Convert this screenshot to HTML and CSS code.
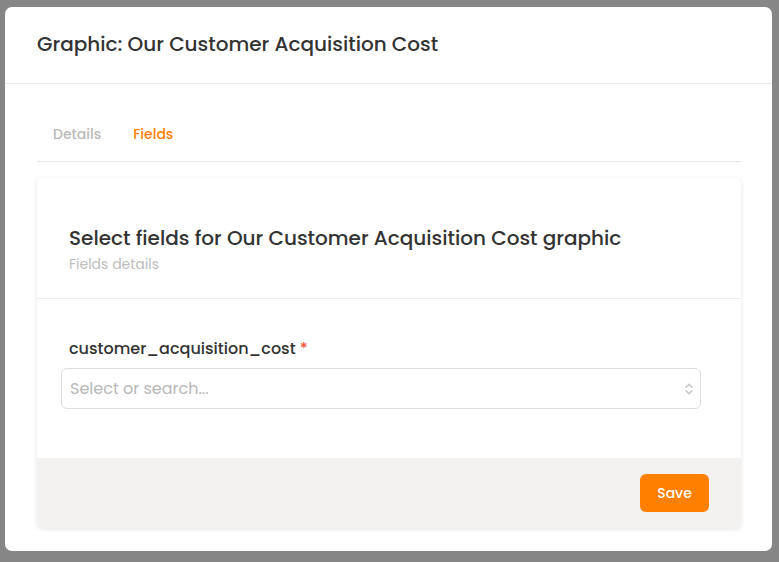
FILE: index.html
```html
<!DOCTYPE html>
<html>
<head>
<meta charset="utf-8">
<link rel="stylesheet" href="styles.css">
</head>
<body>
<div class="overlay">
  <div class="modal">
    <div class="modal-header">
      <h1 class="modal-title">Graphic: Our Customer Acquisition Cost</h1>
    </div>
    <div class="modal-body">
      <div class="tabs">
        <span class="tab">Details</span>
        <span class="tab active">Fields</span>
      </div>
      <div class="card">
        <div class="card-head">
          <h2 class="card-title">Select fields for Our Customer Acquisition Cost graphic</h2>
          <div class="card-sub">Fields details</div>
        </div>
        <div class="card-fields">
          <label class="field-label">customer_acquisition_cost <span class="req">*</span></label>
          <div class="select">
            <span class="placeholder">Select or search...</span>
            <svg class="chev" width="10" height="14" viewBox="0 0 10 14" fill="none" stroke="#c8c8c8" stroke-width="1.6" stroke-linecap="round" stroke-linejoin="round"><path d="M2 5.2 L5 2.2 L8 5.2"/><path d="M2 8.8 L5 11.8 L8 8.8"/></svg>
          </div>
        </div>
        <div class="card-footer">
          <button class="btn-save">Save</button>
        </div>
      </div>
    </div>
  </div>
</div>
</body>
</html>
```

FILE: styles.css
```css
* { box-sizing: border-box; }
html, body { margin: 0; padding: 0; }
body {
  width: 779px;
  height: 562px;
  background: #868686;
  font-family: "Poppins", "Open Sans", "Noto Sans", sans-serif;
  color: #333;
  overflow: hidden;
}
.overlay {
  padding: 7px 7px 0 5px;
}
.modal {
  width: 767px;
  height: 544px;
  background: #fff;
  border-radius: 7px;
  display: flex;
  flex-direction: column;
}
.modal-header {
  height: 77px;
  flex-shrink: 0;
  border-bottom: 1px solid #e9e9e9;
  display: flex;
  align-items: center;
  padding: 0 32px 2px;
}
.modal-title {
  margin: 0;
  font-size: 20px;
  font-weight: 500;
  color: #333;
}
.modal-body {
  padding: 0 31px 0 32px;
}
.tabs {
  display: flex;
  border-bottom: 1px solid #e8e8e8;
  height: 78px;
  align-items: flex-start;
  padding-top: 40px;
}
.tab {
  padding: 0 16px;
  font-size: 14px;
  line-height: 20px;
  font-weight: 500;
  color: #b9b9b9;
}
.tab.active { color: #ff8000; }
.card {
  margin-top: 16px;
  background: #fff;
  border-radius: 5px;
  box-shadow: 0 1px 5px rgba(0,0,0,0.10);
  overflow: hidden;
}
.card-head {
  padding: 46px 32px 22px;
  border-bottom: 1px solid #ececec;
}
.card-title {
  margin: 0;
  font-size: 20px;
  font-weight: 500;
  line-height: 28px;
  color: #333;
}
.card-sub {
  font-size: 14px;
  color: #bdbdbd;
  line-height: 24px;
}
.card-fields {
  padding: 39px 40px 49px 24px;
  display: flex;
  flex-direction: column;
}
.field-label {
  padding-left: 8px;
  font-size: 16px;
  font-weight: 500;
  line-height: 22px;
  color: #333;
}
.req { color: #ee5a3c; }
.select {
  margin-top: 8px;
  height: 41px;
  border: 1px solid #dedede;
  border-radius: 6px;
  display: flex;
  align-items: center;
  justify-content: space-between;
  padding: 0 6px 0 8px;
}
.placeholder {
  font-size: 16px;
  color: #b8b8b8;
}
.card-footer {
  background: #f3f2f1;
  height: 70px;
  display: flex;
  align-items: center;
  justify-content: flex-end;
  padding: 0 32px;
}
.btn-save {
  width: 69px;
  height: 38px;
  border: none;
  border-radius: 6px;
  background: #ff8000;
  color: #fff;
  font-family: inherit;
  font-size: 14px;
  font-weight: 500;
}
```
